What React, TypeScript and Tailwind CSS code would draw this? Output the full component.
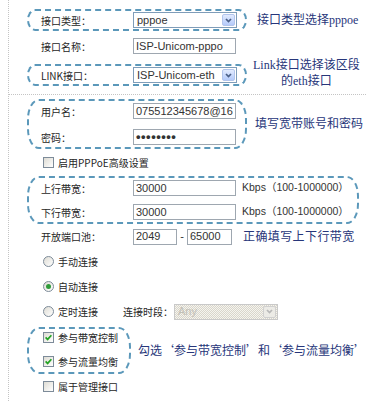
import React from "react";

const note = "font-['Liberation_Serif','Noto_Sans_CJK_SC',serif] text-[12px] leading-[16px] text-[#27367a] whitespace-nowrap";
const field = "h-[16px] border border-[#9ea7b0] bg-white pl-[2px] flex items-center overflow-hidden whitespace-nowrap font-['Liberation_Sans','Noto_Sans_CJK_SC',sans-serif] text-[11px] text-[#333]";
const unit = "ml-[6px] font-['Liberation_Sans','Noto_Sans_CJK_SC',sans-serif] text-[10.5px] text-[#333]";

function Arrow({ disabled }: { disabled?: boolean }) {
  return (
    <span
      className={
        disabled
          ? "m-[1px] self-stretch w-[13px] shrink-0 rounded-[2px] border border-[#d0d0d0] bg-[#ecebe6] flex items-center justify-center"
          : "m-[1px] self-stretch w-[13px] shrink-0 rounded-[2px] border border-[#b2c5ec] bg-gradient-to-b from-[#e2ebfe] to-[#b4cafa] flex items-center justify-center"
      }
    >
      <svg width="7" height="5" viewBox="0 0 7 5">
        <path d="M1 1 L3.5 3.6 L6 1" fill="none" stroke={disabled ? "#b8b8b8" : "#4a5f87"} strokeWidth="1.7" />
      </svg>
    </span>
  );
}

function Select({ value, disabled }: { value: string; disabled?: boolean }) {
  return (
    <div
      className={
        disabled
          ? "h-[16px] w-[104px] border border-[#c9c9c9] flex items-center bg-[image:repeating-conic-gradient(#d9d6cb_0%_25%,#f5f4ef_0%_50%)] bg-[size:2px_2px]"
          : "h-[16px] w-[104px] border border-[#7f9db9] bg-white flex items-center"
      }
    >
      <span
        className={
          disabled
            ? "flex-1 pl-[3px] font-['Liberation_Sans',sans-serif] text-[11px] leading-none text-[#c2c0b8]"
            : "flex-1 pl-[3px] font-['Liberation_Sans',sans-serif] text-[11px] leading-none text-[#333]"
        }
      >
        {value}
      </span>
      <Arrow disabled={disabled} />
    </div>
  );
}

function Check({ checked }: { checked?: boolean }) {
  return (
    <span className="w-[11px] h-[11px] shrink-0 border border-[#7d8b99] bg-gradient-to-br from-[#dedcd4] to-white flex items-center justify-center">
      {checked && (
        <svg width="7" height="7" viewBox="0 0 7 7">
          <path d="M0.6 3.4 L2.6 5.4 L6.4 1.2" fill="none" stroke="#23a323" strokeWidth="1.7" />
        </svg>
      )}
    </span>
  );
}

function Radio({ on }: { on?: boolean }) {
  return (
    <span className="w-[11px] h-[11px] shrink-0 rounded-full border border-[#7d8b99] bg-gradient-to-br from-[#dedcd4] to-white flex items-center justify-center">
      {on && <span className="w-[5px] h-[5px] rounded-full bg-[#2f9b3a]" />}
    </span>
  );
}

export default function App() {
  return (
    <div className="w-[379px] h-[401px] bg-white overflow-hidden font-['Noto_Sans_CJK_SC',sans-serif] text-[10px] text-[#262626]">
      <div className="ml-[8px] h-full border-l border-dotted border-[#c4c4c4]">
        {/* interface */}
        <div className="pl-[18px] pt-[9px]">
          <div className="flex items-center">
            <div className="w-[220px] h-[22px] border-2 border-dashed border-[#5b98ba] rounded-[8px/11px] pl-[12px] flex items-center">
              <span className="w-[92px]">接口类型：</span>
              <Select value="pppoe" />
            </div>
            <span className={`ml-[10px] ${note}`}>接口类型选择pppoe</span>
          </div>

          <div className="h-[30px] pl-[14px] flex items-center">
            <span className="w-[92px]">接口名称：</span>
            <div className={`w-[103px] ${field}`}>ISP-Unicom-pppo</div>
          </div>

          <div className="flex items-center">
            <div className="w-[220px] h-[22px] border-2 border-dashed border-[#5b98ba] rounded-[8px/11px] pl-[12px] flex items-center">
              <span className="w-[92px]">LINK接口：</span>
              <Select value="ISP-Unicom-eth" />
            </div>
            <div className={`ml-[6px] mt-[-4px] text-center ${note}`}>
              <div>Link接口选择该区段</div>
              <div>的eth接口</div>
            </div>
          </div>
        </div>

        <div className="mt-[5px] w-[357px] border-t border-dotted border-[#c4c4c4]" />

        {/* account */}
        <div className="pl-[18px] pt-[4px]">
          <div className="flex items-center">
            <div className="w-[220px] h-[50px] border-2 border-dashed border-[#5b98ba] rounded-[12px/20px] pl-[12px] flex flex-col justify-center gap-[6px]">
              <div className="h-[20px] flex items-center">
                <span className="w-[92px]">用户名：</span>
                <div className={`w-[103px] ${field}`}>075512345678@16</div>
              </div>
              <div className="h-[20px] flex items-center">
                <span className="w-[92px]">密码：</span>
                <div className={`w-[103px] ${field} text-[13px] font-bold tracking-[0.5px]`}>••••••••</div>
              </div>
            </div>
            <span className={`ml-[8px] ${note}`}>填写宽带账号和密码</span>
          </div>

          <div className="h-[27px] pl-[16px] flex items-center gap-[4px]">
            <Check />
            <span>启用PPPoE高级设置</span>
          </div>

          <div className="w-[332px] h-[48px] border-2 border-dashed border-[#5b98ba] rounded-[12px/20px] pl-[12px] flex flex-col justify-between">
            <div className="h-[20px] flex items-center">
              <span className="w-[92px]">上行带宽：</span>
              <div className={`w-[103px] ${field}`}>30000</div>
              <span className={unit}>Kbps（100-1000000）</span>
            </div>
            <div className="h-[20px] flex items-center">
              <span className="w-[92px]">下行带宽：</span>
              <div className={`w-[103px] ${field}`}>30000</div>
              <span className={unit}>Kbps（100-1000000）</span>
            </div>
          </div>

          <div className="h-[25px] pl-[14px] flex items-center">
            <span className="w-[92px]">开放端口池：</span>
            <div className={`w-[44px] ${field}`}>2049</div>
            <span className="w-[10px] text-center font-['Liberation_Sans',sans-serif] text-[11px] text-[#333]">-</span>
            <div className={`w-[45px] ${field}`}>65000</div>
            <span className={`ml-[11px] tracking-[0.4px] ${note}`}>正确填写上下行带宽</span>
          </div>

          <div className="h-[25px] pl-[16px] flex items-center gap-[4px]">
            <Radio />
            <span>手动连接</span>
          </div>
          <div className="h-[25px] pl-[16px] flex items-center gap-[4px]">
            <Radio on />
            <span>自动连接</span>
          </div>
          <div className="h-[25px] pl-[16px] flex items-center">
            <Radio />
            <span className="ml-[4px] w-[65px]">定时连接</span>
            <span className="w-[51px]">连接时段：</span>
            <Select value="Any" disabled />
          </div>

          <div className="mt-[3px] flex items-center">
            <div className="w-[104px] h-[47px] border-2 border-dashed border-[#5b98ba] rounded-[12px/20px] pl-[14px] pb-[3px] flex flex-col justify-center gap-[8px]">
              <div className="h-[16px] flex items-center gap-[4px]">
                <Check checked />
                <span>参与带宽控制</span>
              </div>
              <div className="h-[16px] flex items-center gap-[4px]">
                <Check checked />
                <span>参与流量均衡</span>
              </div>
            </div>
            <span className={`ml-[7px] ${note}`}>
              勾选<span className="font-['Noto_Sans_CJK_SC',sans-serif]">‘</span>参与带宽控制<span className="font-['Noto_Sans_CJK_SC',sans-serif]">’</span>和<span className="font-['Noto_Sans_CJK_SC',sans-serif]">‘</span>参与流量均衡<span className="font-['Noto_Sans_CJK_SC',sans-serif]">’</span>
            </span>
          </div>

          <div className="h-[25px] pl-[16px] flex items-center gap-[4px]">
            <Check />
            <span>属于管理接口</span>
          </div>
        </div>
      </div>
    </div>
  );
}
